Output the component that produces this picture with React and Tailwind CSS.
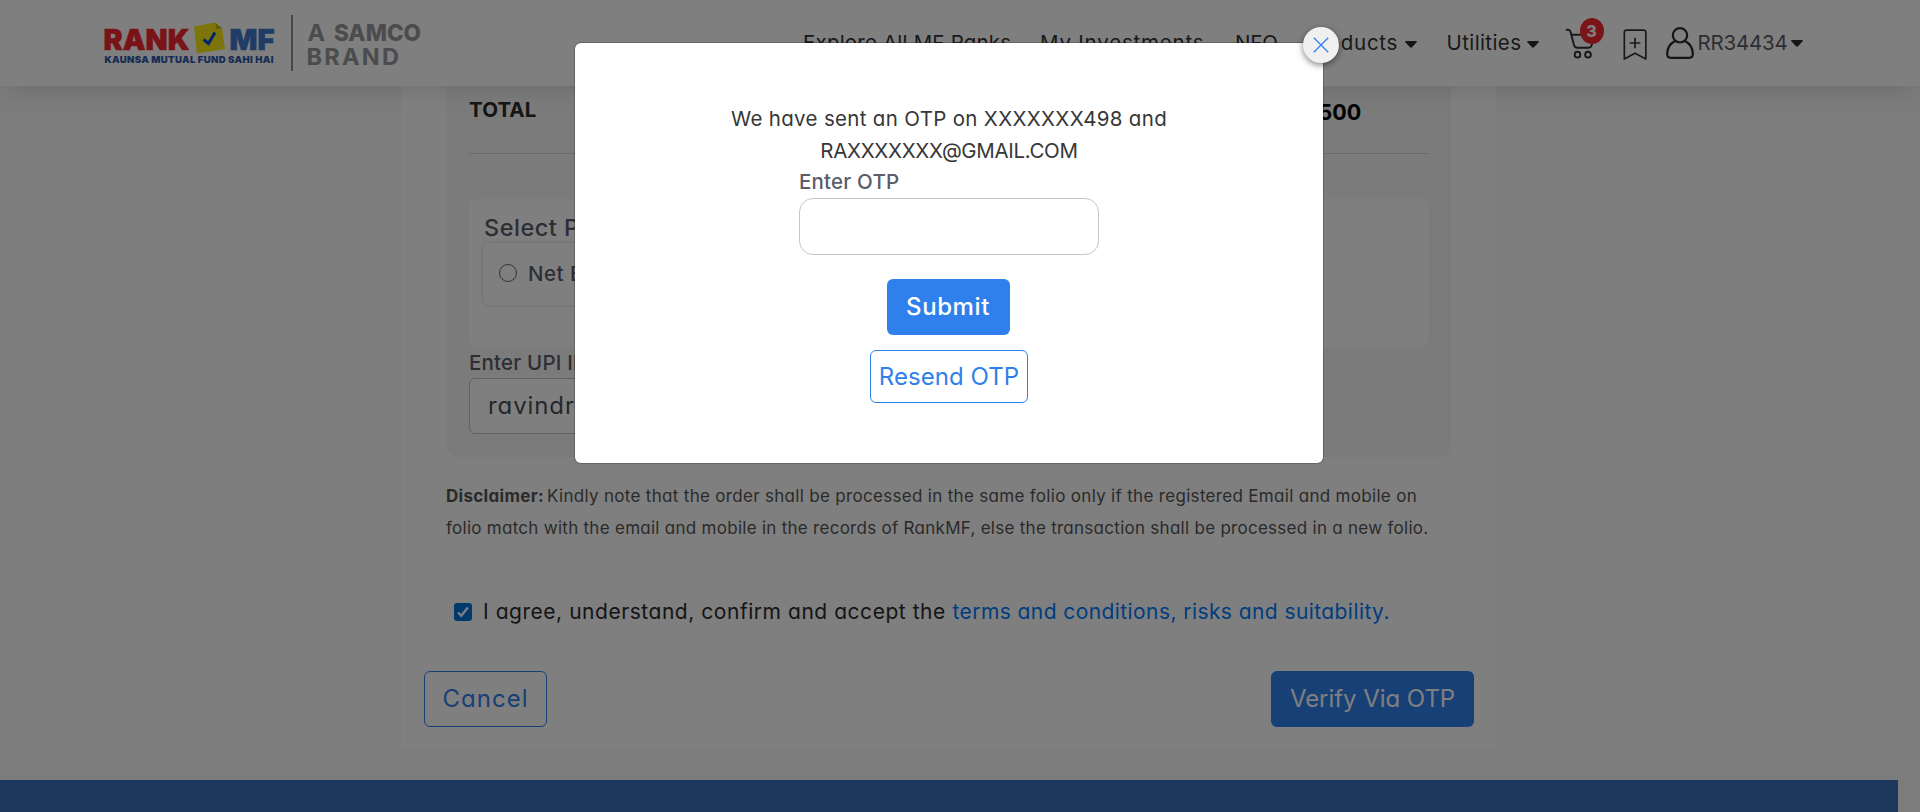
import React from "react";

function Logo() {
  return (
    <svg width="350" height="76" viewBox="100 0 350 76" className="block font-['Inter']">
      <g fontWeight="900">
        <text x="103.5" y="49.5" fontSize="28.5" fill="#f5262f" stroke="#f5262f" strokeWidth="0.5" textLength="86" lengthAdjust="spacingAndGlyphs">RANK</text>
        <text x="229.5" y="49.5" fontSize="28.5" fill="#3c78cc" stroke="#3c78cc" strokeWidth="0.5" textLength="45" lengthAdjust="spacingAndGlyphs">MF</text>
        <text x="104.5" y="63.2" fontSize="9.6" fill="#2c5aaa" textLength="169">KAUNSA MUTUAL FUND SAHI HAI</text>
      </g>
      <path d="M194 26.5 L215 22.5 L222 28 L225 49 L197 53.5 Z" fill="#fbea14" />
      <path d="M215 22.5 L222 28 L216.500 29.500 Z" fill="#c9ba10" />
      <path d="M203.5 39.500 L208.500 43.500 L215 32.500" fill="none" stroke="#0046dc" strokeWidth="3" />
      <rect x="291" y="15" width="2" height="56" fill="#8c8f92" />
      <g fill="#94989a">
        <text x="307.5" y="41" fontSize="23.500" fontWeight="700">A</text>
        <text x="334" y="41" fontSize="23.500" fontWeight="800" textLength="87" lengthAdjust="spacingAndGlyphs">SAMCO</text>
        <text x="306.500" y="65.300" fontSize="23.500" fontWeight="700" textLength="92.500">BRAND</text>
      </g>
    </svg>
  );
}

function Caret({ className = "" }) {
  return (
    <svg width="12" height="7" viewBox="0 0 12 7" className={className}>
      <path d="M0.800 0 H11.200 Q12.300 0.300 11.600 1.300 L7 6.300 Q6 7.200 5 6.300 L0.400 1.300 Q-0.300 0.300 0.800 0 Z" fill="#2b2b2b" />
    </svg>
  );
}

function CartIcon() {
  return (
    <svg width="32" height="32" viewBox="15 55 96 96" fill="none" stroke="#333" strokeWidth="5.800" strokeLinecap="round" strokeLinejoin="round">
      <path d="M20 60 H25 Q30 60 31.500 66 L42 106 Q44 114 52 114 H86 Q93 114 95 107 L102 75 H34" />
      <circle cx="52.500" cy="135" r="8.500" />
      <circle cx="84" cy="135" r="8.500" />
    </svg>
  );
}

function BookmarkIcon() {
  return (
    <svg width="24" height="32" viewBox="189 58 72 96" fill="none" stroke="#333" strokeWidth="5">
      <path d="M193 148 V68 Q193 61.500 200 61.500 H250 Q257.500 61.500 257.500 68 V148 L225 131 Z" strokeLinejoin="round" />
      <path d="M225 84 V116 M209 100 H241" />
    </svg>
  );
}

function UserIcon() {
  return (
    <svg width="28" height="32" viewBox="318 53 84 96" fill="none" stroke="#2b2b2b" strokeWidth="6.600">
      <circle cx="360" cy="78" r="21.500" />
      <path d="M345 95 C328 104 321.500 121 321.500 135 Q321.500 145.500 333 145.500 H387 Q398.500 145.500 398.500 135 C398.500 121 392 104 375 95" />
    </svg>
  );
}

function Header() {
  return (
    <header className="relative z-10 flex h-[86px] shrink-0 items-center bg-white pl-[100px] text-[20.5px] text-[#333] shadow-[0_8px_24px_-6px_rgba(0,0,0,0.14)]">
      <div className="h-[76px] w-[703px] self-start">
        <Logo />
      </div>
      <nav className="flex items-center whitespace-nowrap">
        <a className="w-[237px] tracking-[0.2px]">Explore All MF Ranks</a>
        <a className="w-[195px] tracking-[0.8px]">My Investments</a>
        <a className="w-[71px] tracking-[-0.1px]">NFO</a>
        <a className="w-[98.5px] tracking-[0.7px]">Products</a>
        <Caret className="mt-[2px] mr-[30px]" />
        <a className="w-20 tracking-[0.4px]">Utilities</a>
        <Caret className="mt-[2px] mr-[26px]" />
      </nav>
      <div className="flex h-full items-center">
        <div className="relative mt-[2px] w-[58px]">
          <CartIcon />
          <span className="absolute top-[-10px] left-[15px] flex h-[26px] w-6 items-center justify-center rounded-[50%] bg-[#f5282f] text-base font-extrabold text-white">3</span>
        </div>
        <div className="mt-[4px] w-[43px]">
          <BookmarkIcon />
        </div>
        <UserIcon />
        <span className="ml-[4px] w-[93px] tracking-[-0.2px] text-[#5b5d68]">RR34434</span>
        <Caret />
      </div>
    </header>
  );
}

function OrderPanel() {
  return (
    <section className="mx-[45px] rounded-b-xl bg-[#f6f6f6] pr-[22px] pb-[23px] pl-[23px]">
      <div className="flex h-[68px] border-b border-[#d4d4d4]">
        <span className="w-[849.5px] text-[20.5px] leading-[47px] font-bold tracking-[0.1px] text-[#2b2b2b]">TOTAL</span>
        <span className="text-[21.5px] leading-[52px] font-bold text-black">500</span>
      </div>
      <div className="mt-[45px] h-[148px] rounded-lg bg-white pt-[13px] pr-[15px] pl-[14px]">
        <h3 className="pl-px text-[23.5px] leading-[31px] font-medium tracking-[0.5px] text-[#5b5d68]">Select Payment Mode</h3>
        <label className="flex h-[62px] w-[360px] items-center rounded-md pl-[16px] shadow-[0_0_4px_rgba(0,0,0,0.16)]">
          <span className="mb-[3px] size-[18px] rounded-full border-[1.5px] border-[#6a6a6a]" />
          <span className="ml-[11px] text-[20.5px] font-medium tracking-[0.5px] text-[#5b5d68]">Net Banking</span>
        </label>
      </div>
      <label className="block h-[31px] text-[20.5px] leading-[32px] font-medium tracking-[0.2px] text-[#5b5d68]">Enter UPI ID</label>
      <div className="h-14 w-[480px] rounded-md border border-[#c4c4c4] bg-white pl-[18px] text-[24px] leading-[54px] tracking-[0.9px] text-[#495057]">ravindra</div>
    </section>
  );
}

function OrderCard() {
  return (
    <main className="ml-[401px] w-[1095px] bg-white">
      <OrderPanel />
      <p className="mt-[23px] ml-[45px] text-[17px] leading-8 whitespace-nowrap text-[#555]">
        <b className="inline-block w-[101px] tracking-[0.3px]">Disclaimer:</b>
        <span className="tracking-[0.31px]">Kindly note that the order shall be processed in the same folio only if the registered Email and mobile on</span>
        <br />
        <span className="tracking-[0.275px]">folio match with the email and mobile in the records of RankMF, else the transaction shall be processed in a new folio.</span>
      </p>
      <div className="mt-[52px] flex h-8 items-center pl-[53px]">
        <span className="flex size-[18px] items-center justify-center rounded-[3px] bg-[#0075d8]">
          <svg width="14" height="14" viewBox="0 0 14 14" fill="none" stroke="#fff" strokeWidth="2.400">
            <path d="M2 7.500 L5.300 10.800 L11.800 2.500" />
          </svg>
        </span>
        <span className="ml-[11px] w-[469.5px] text-[21px] tracking-[0.54px] whitespace-nowrap text-[#2b2b2b]">I agree, understand, confirm and accept the</span>
        <a className="text-[21px] tracking-[0.42px] whitespace-nowrap text-[#007bff]">terms and conditions, risks and suitability.</a>
      </div>
      <div className="mt-[43px] flex justify-between pr-[22px] pb-[23px] pl-[23px] text-[24px]">
        <button className="h-14 w-[123px] rounded-md border border-[#2f80ed] tracking-[1px] text-[#2f80ed]">Cancel</button>
        <button className="h-14 w-[203px] rounded-md bg-[#2f80ed] tracking-[-0.05px] text-white">Verify Via OTP</button>
      </div>
    </main>
  );
}

function OtpDialog() {
  return (
    <div className="absolute inset-0 z-20 bg-black/50 pt-[43px] pl-[575px]">
      <div className="relative flex h-[420px] w-[748px] flex-col items-center rounded-md bg-white pt-[60px] shadow-[0_0_0_1px_rgba(0,0,0,0.2)]">
        <button className="absolute top-[-16px] right-[-16px] flex size-9 items-center justify-center rounded-full bg-[#f0f0f0] shadow-[0_2px_6px_rgba(0,0,0,0.5)]">
          <svg width="16" height="16" viewBox="0 0 16 16" stroke="#2f80ed" strokeWidth="1.300">
            <path d="M0.800 0.800 L15.200 15.200 M15.200 0.800 L0.800 15.200" />
          </svg>
        </button>
        <p className="text-center text-[20.5px] leading-8 text-[#373737]">
          <span className="tracking-[0.32px]">We have sent an OTP on XXXXXXX498 and</span>
          <br />
          <span className="tracking-[-0.33px]">RAXXXXXXX@GMAIL.COM</span>
        </p>
        <div className="w-[300px]">
          <label className="block h-[31px] text-[20.5px] leading-[30px] font-medium tracking-[0.2px] text-[#5b5d68]">Enter OTP</label>
          <div className="h-[57px] rounded-[14px] border border-[#c6c6c6] bg-white" />
        </div>
        <button className="mt-[24px] mr-[2px] h-14 w-[123px] rounded-md bg-[#2f80ed] text-[24px] font-medium tracking-[0.6px] text-white">Submit</button>
        <button className="mt-[15px] h-[53px] w-[158px] rounded-md border border-[#2f80ed] text-[24px] tracking-[0.05px] text-[#2f80ed]">Resend OTP</button>
      </div>
    </div>
  );
}

export default function App() {
  return (
    <div className="relative flex h-[812px] w-[1920px] flex-col overflow-hidden bg-[#f8f8f8] font-['Inter',sans-serif] [font-feature-settings:'cv11']">
      <Header />
      <OrderCard />
      <footer className="mt-[30px] h-8 w-[1898px] bg-[#3c6eb8]" />
      <OtpDialog />
    </div>
  );
}
